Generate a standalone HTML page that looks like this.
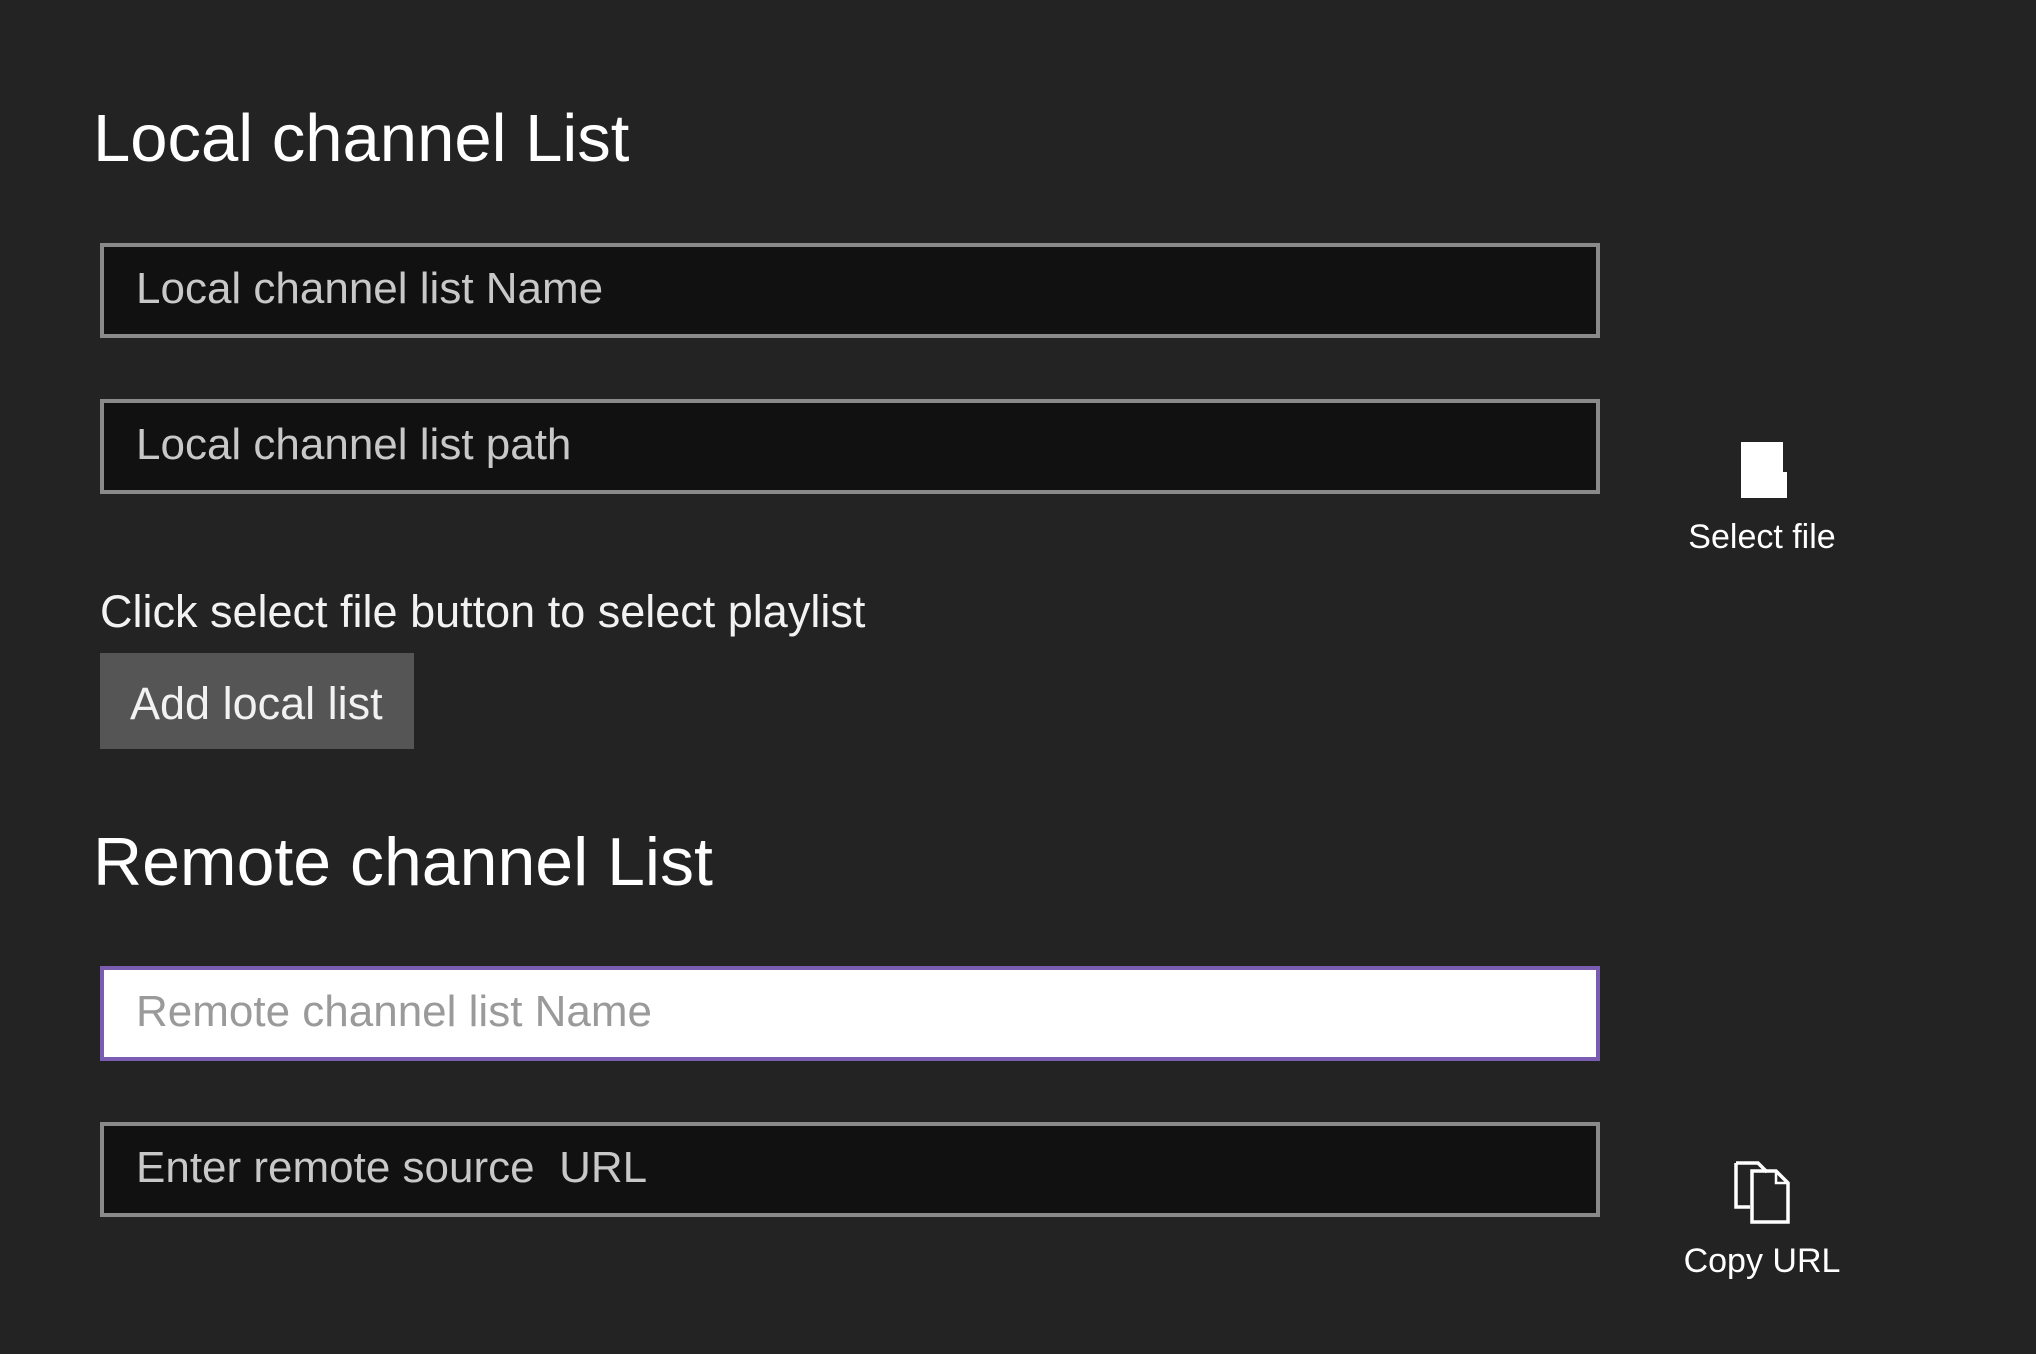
<!DOCTYPE html>
<html><head><meta charset="utf-8"><style>
html,body{margin:0;padding:0;}
body{width:2036px;height:1354px;background:#232323;position:relative;overflow:hidden;font-family:"Liberation Sans",sans-serif;color:#fff;}
.t{position:absolute;left:93px;line-height:1;white-space:nowrap;}
.in{position:absolute;left:100px;width:1492px;height:87px;background:#111;border:4px solid #8a8a8a;}
.in span{position:absolute;left:32px;top:17px;font-size:44px;color:#c8c8c8;white-space:nowrap;}
.lbl{position:absolute;font-size:34px;white-space:nowrap;text-align:center;width:240px;}
</style></head><body>
<div class="t" style="top:105px;font-size:67px">Local channel List</div>
<div class="in" style="top:243px"><span>Local channel list Name</span></div>
<div class="in" style="top:399px"><span>Local channel list path</span></div>
<div style="position:absolute;left:100px;top:586px;font-size:45px;white-space:nowrap;color:#f2f2f2">Click select file button to select playlist</div>
<div style="position:absolute;left:100px;top:653px;width:314px;height:96px;background:#555;"><span style="position:absolute;left:30px;top:25px;font-size:45px;color:#f2f2f2">Add local list</span></div>
<div class="t" style="top:828px;font-size:68px">Remote channel List</div>
<div class="in" style="top:966px;background:#fff;border-color:#7a5cb0"><span style="color:#9a9a9a">Remote channel list Name</span></div>
<div class="in" style="top:1122px"><span>Enter remote source&nbsp; URL</span></div>
<svg style="position:absolute;left:1741px;top:442px" width="48" height="58" viewBox="0 0 48 58"><path d="M0 0H42V30H46V56H0Z" fill="#fff"/></svg>
<div class="lbl" style="left:1642px;top:518px">Select file</div>
<svg style="position:absolute;left:1733px;top:1161px" width="60" height="64" viewBox="0 0 60 64" fill="none" stroke="#fff" stroke-width="3.5"><path d="M3 2H25L34 11M17 46H3V2"/><path d="M19 10H43L55 22V61H19Z"/><path d="M43 10V22H55" stroke-width="2.5"/></svg>
<div class="lbl" style="left:1642px;top:1242px">Copy URL</div>
</body></html>
